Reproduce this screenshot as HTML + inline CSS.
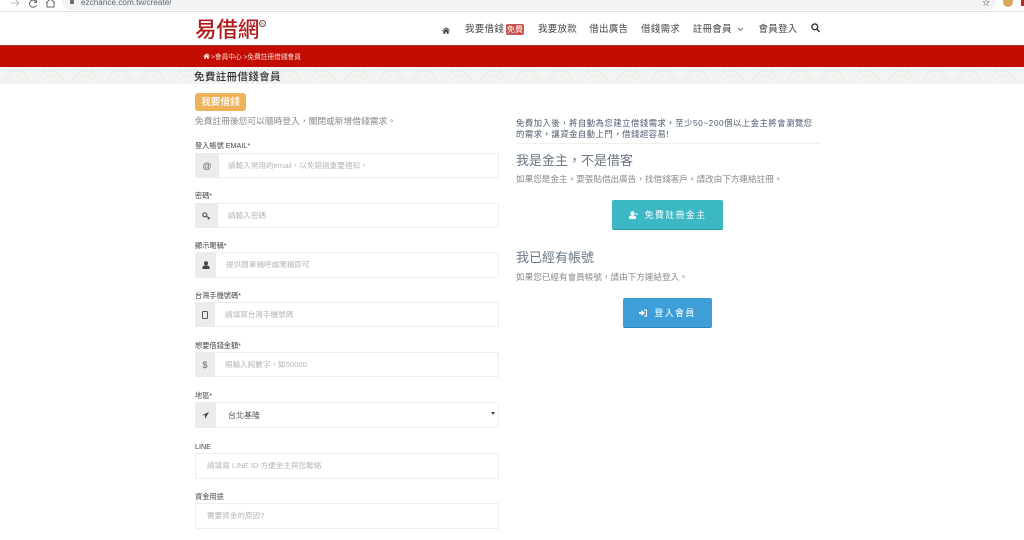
<!DOCTYPE html>
<html lang="zh-TW"><head><meta charset="utf-8"><title>免費註冊借錢會員</title>
<style>
html,body{margin:0;padding:0;background:#fff}
body{width:1024px;height:540px;position:relative;overflow:hidden;font-family:"Liberation Sans","Noto Sans CJK TC",sans-serif;color:#666}
#w{position:absolute;left:0;top:0;width:1024px;height:540px;overflow:hidden;filter:blur(.3px)}
.a{position:absolute;white-space:nowrap}
.lab{position:absolute;left:195px;font-size:7.2px;line-height:12px;color:#444;white-space:nowrap;margin-top:0}
.box{position:absolute;left:195px;width:302px;height:23px;border:1px solid #ecedee;background:#fff;border-radius:2px}
.add{position:absolute;left:-1px;top:-1px;bottom:-1px;background:#ececec;display:flex;align-items:center;justify-content:center;color:#666;font-size:9px;border-radius:2px 0 0 2px}
.ph{position:absolute;top:0;line-height:23px;font-size:7.6px;color:#b5b5b5;white-space:nowrap}
.nav{position:absolute;top:22.5px;font-size:9.5px;line-height:14px;color:#444;letter-spacing:.25px;white-space:nowrap}
.btn{position:absolute;color:#fff;font-size:9px;letter-spacing:1.3px;display:flex;align-items:center;justify-content:center;border-radius:2px}
</style></head><body><div id="w">
<!-- browser bar -->
<div class="a" style="left:0;top:0;width:1024px;height:12px;background:#fff;border-bottom:1px solid #e3e3e3;box-sizing:border-box"></div>
<div class="a" style="left:62px;top:-8px;width:934px;height:18px;background:#f1f3f4;border-radius:9px"></div>
<svg class="a" style="left:0;top:0" width="60" height="10" viewBox="0 0 60 10" fill="none" stroke-width="1"><path d="M11 3h8M16 0l3 3-3 3" stroke="#bbb"/><path d="M36 1.5A3.6 3.6 0 1 0 36.5 5M36.5 0v2.5H34" stroke="#666"/><path d="M46 3l4.5-4L55 3M47 2.5V7h7V2.5" stroke="#666"/></svg>
<div class="a" style="left:70px;top:0;width:4px;height:4px;background:#666;border-radius:1px"></div>
<div class="a" style="left:81px;top:-3.5px;font-size:8.2px;line-height:12px;color:#5f6368">ezchance.com.tw/create/</div>
<div class="a" style="left:982px;top:-3px;font-size:8px;line-height:12px;color:#555">☆</div>
<div class="a" style="left:1003px;top:0;width:10px;height:7px;background:#d9a95e;border-radius:0 0 5px 5px"></div>
<div class="a" style="left:1021px;top:0;width:3px;height:6px;background:#b52a25"></div>
<!-- header -->
<div class="a" style="left:195px;top:15px;font-family:'Noto Sans CJK TC',sans-serif;font-weight:500;font-size:21.5px;line-height:28px;color:#b3191c;letter-spacing:-.1px">易借網</div>
<div class="a" style="left:259px;top:20px;width:7px;height:7px;border:1px solid #7a4a40;border-radius:50%;box-sizing:border-box;font-size:4px;line-height:5px;text-align:center;color:#7a4a40">R</div>
<svg class="a" style="left:442px;top:26.5px" width="8" height="7" viewBox="0 0 10 9"><path d="M5 0.5L0 4.6l.6.7L5 1.8l4.4 3.5.6-.7L8 3V1H7v1.2zM1.6 5.3V8.6h2.5V6h1.8v2.6h2.5V5.3L5 2.6z" fill="#333"/></svg>
<div class="nav" style="left:465px">我要借錢</div>
<div class="a" style="left:506px;top:24px;width:18px;height:11px;background:#c9534f;border-radius:2px;color:#fff;font-size:8px;line-height:11px;text-align:center">免費</div>
<div class="nav" style="left:538px">我要放款</div>
<div class="nav" style="left:589.3px">借出廣告</div>
<div class="nav" style="left:641px">借錢需求</div>
<div class="nav" style="left:692.7px">註冊會員</div>
<svg class="a" style="left:737px;top:27px" width="7" height="5" viewBox="0 0 7 5" fill="none"><path d="M1 1l2.5 2.5L6 1" stroke="#777"/></svg>
<div class="nav" style="left:758.5px">會員登入</div>
<svg class="a" style="left:811px;top:23px" width="9" height="10" viewBox="0 0 9 10" fill="none" stroke="#333" stroke-width="1.4"><circle cx="3.8" cy="3.8" r="2.9"/><path d="M5.9 6L8.4 9"/></svg>
<!-- red bar -->
<div class="a" style="left:0;top:45px;width:1024px;height:22px;background:#c30d00;border-top:1px solid #a63a30;box-sizing:border-box"></div>
<svg class="a" style="left:203px;top:53px" width="7" height="6" viewBox="0 0 10 9"><path d="M5 0.5L0 4.6l.6.7L5 1.8l4.4 3.5.6-.7L8 3V1H7v1.2zM1.6 5.3V8.6h2.5V6h1.8v2.6h2.5V5.3L5 2.6z" fill="#fff"/></svg>
<div class="a" style="left:211px;top:51.5px;font-size:6.7px;line-height:11px;color:#f6dcd8">&gt;會員中心 &gt;免費註冊借錢會員</div>
<!-- pattern band -->
<svg class="a" style="left:0;top:67px" width="1024" height="17"><defs><pattern id="p" width="34" height="17" patternUnits="userSpaceOnUse"><rect width="34" height="17" fill="#f4f4f2"/><g fill="none" stroke="#ecece9" stroke-width="1"><circle cx="17" cy="17" r="13"/><circle cx="17" cy="17" r="8"/><circle cx="17" cy="17" r="3.5"/><circle cx="0" cy="4" r="10"/><circle cx="34" cy="4" r="10"/></g></pattern></defs><rect width="1024" height="17" fill="url(#p)"/></svg>
<div class="a" style="left:194px;top:70px;font-size:10.5px;line-height:15px;font-weight:500;color:#333;letter-spacing:.35px">免費註冊借錢會員</div>
<!-- left -->
<div class="a" style="left:195px;top:93px;width:51px;height:18px;background:#edb25a;border-radius:3px;color:#fff;font-size:9.7px;font-weight:500;line-height:19px;text-align:center">我要借錢</div>
<div class="a" style="left:195px;top:114px;font-size:8.7px;line-height:14px;color:#888;letter-spacing:.05px">免費註冊後您可以隨時登入，關閉或新增借錢需求。</div>

<div class="lab" style="top:140px">登入帳號 EMAIL*</div>
<div class="box" style="top:153px"><div class="add" style="width:24px">@</div><div class="ph" style="left:32px">請輸入常用的email，以免錯過重要通知。</div></div>
<div class="lab" style="top:190px">密碼*</div>
<div class="box" style="top:203px"><div class="add" style="width:23px"><svg width="9" height="8" viewBox="0 0 9 8" fill="none" stroke="#555" stroke-width="1.2"><circle cx="2.8" cy="2.8" r="2"/><path d="M4.3 4.2L8 6.5M6.4 5.5V7.5"/></svg></div><div class="ph" style="left:32px">請輸入密碼</div></div>
<div class="lab" style="top:240px">顯示暱稱*</div>
<div class="box" style="top:252px;height:24px"><div class="add" style="width:21px"><svg width="8" height="8" viewBox="0 0 8 8"><circle cx="4" cy="2.2" r="2" fill="#444"/><path d="M0.5 8V6.3C.5 5 2 4.4 4 4.4S7.5 5 7.5 6.3V8z" fill="#444"/></svg></div><div class="ph" style="left:30px;line-height:24px">提供簡單稱呼或暱稱即可</div></div>
<div class="lab" style="top:290px">台灣手機號碼*</div>
<div class="box" style="top:302px"><div class="add" style="width:20px"><svg width="6" height="8" viewBox="0 0 6 8" fill="none" stroke="#555"><rect x=".5" y=".5" width="5" height="7" rx="1"/></svg></div><div class="ph" style="left:29px">請填寫台灣手機號碼</div></div>
<div class="lab" style="top:340px">想要借錢金額*</div>
<div class="box" style="top:352px"><div class="add" style="width:20px">$</div><div class="ph" style="left:29px">限輸入純數字，如50000</div></div>
<div class="lab" style="top:390px">地區*</div>
<div class="box" style="top:402px;height:24px"><div class="add" style="width:21px"><svg width="7" height="7" viewBox="0 0 7 7"><path d="M7 0L0 3.2h3.1V7z" fill="#444"/></svg></div><div class="ph" style="left:32px;line-height:25px;color:#555;font-size:8px">台北基隆</div><div class="a" style="right:3px;top:9px;width:0;height:0;border:2px solid transparent;border-top:3px solid #444"></div></div>
<div class="lab" style="top:441px">LINE</div>
<div class="box" style="top:453px;height:24px"><div class="ph" style="left:11px;line-height:24px">請填寫 LINE ID 方便金主與您聯絡</div></div>
<div class="lab" style="top:491px">資金用途</div>
<div class="box" style="top:503px;height:24px"><div class="ph" style="left:11px;line-height:24px">需要資金的原因?</div></div>
<!-- right -->
<div class="a" style="left:516px;top:118px;font-size:8.3px;line-height:11.2px;color:#4c5a70;letter-spacing:.55px">免費加入後，將自動為您建立借錢需求，至少50~200個以上金主將會瀏覽您<br>的需求，讓資金自動上門，借錢超容易!</div>
<div class="a" style="left:516px;top:143px;width:304px;height:1px;background:#f0f0f0"></div>
<div class="a" style="left:516px;top:151.5px;font-size:13px;line-height:18px;color:#6b7685;letter-spacing:0">我是金主，不是借客</div>
<div class="a" style="left:516px;top:172px;font-size:8.6px;line-height:14px;color:#888">如果您是金主，要張貼借出廣告，找借錢客戶，請改由下方連結註冊。</div>
<div class="btn" style="left:612px;top:200px;width:111px;height:30px;background:#3cb8c4;border-bottom:1px solid #2e9aa5;box-sizing:border-box"><svg width="9" height="8" viewBox="0 0 9 8" style="margin-right:7px"><circle cx="3.5" cy="2.2" r="2" fill="#fff"/><path d="M0 8V6.3C0 5 1.5 4.4 3.5 4.4S7 5 7 6.3V8zM6 2.5h3v1H6z" fill="#fff"/></svg>免費註冊金主</div>
<div class="a" style="left:516px;top:249px;font-size:13px;line-height:18px;color:#6b7685">我已經有帳號</div>
<div class="a" style="left:516px;top:270px;font-size:8.6px;line-height:14px;color:#888">如果您已經有會員帳號，請由下方連結登入。</div>
<div class="btn" style="left:623px;top:298px;width:89px;height:30px;background:#3e9fd8;border-bottom:1px solid #2f86bb;box-sizing:border-box"><svg width="8" height="8" viewBox="0 0 8 8" style="margin-right:7px"><path d="M0 3h2.5V1L6 4 2.5 7V5H0zM5 .5h3v7H5V6.5h2v-5H5z" fill="#fff"/></svg>登入會員</div>
</div></body></html>
